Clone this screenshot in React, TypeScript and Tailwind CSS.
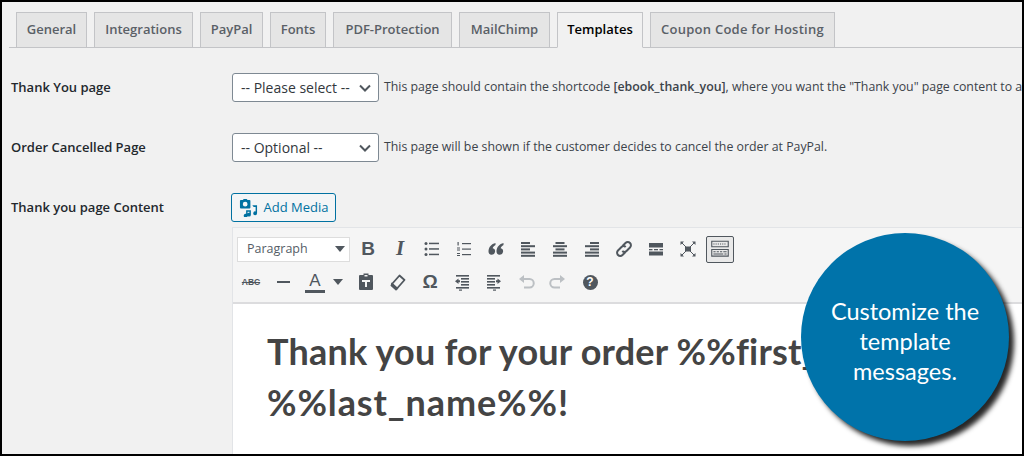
import React from 'react';

const tabs = [
  { name: 'General', w: 'w-[71px]' },
  { name: 'Integrations', w: 'w-[99px]' },
  { name: 'PayPal', w: 'w-[63px]' },
  { name: 'Fonts', w: 'w-[56px]' },
  { name: 'PDF-Protection', w: 'w-[119px]' },
  { name: 'MailChimp', w: 'w-[91px]' },
  { name: 'Templates', w: 'w-[86px]' },
  { name: 'Coupon Code for Hosting', w: 'w-[185px] tracking-[0.25px]' },
];

const ICON = '#50575e';

/** 20x20 editor icon wrapper */
function Ico({ children, size = 20 }: { children: React.ReactNode; size?: number }) {
  return (
    <svg width={size} height={size} viewBox="0 0 20 20" fill={ICON}>
      {children}
    </svg>
  );
}

function Btn({ children, className = 'w-8' }: { children: React.ReactNode; className?: string }) {
  return <div className={`h-7 flex items-center justify-center shrink-0 ${className}`}>{children}</div>;
}

function Chevron() {
  return (
    <svg width="12" height="8" viewBox="0 0 12 8" fill="none" stroke="#50575e" strokeWidth="2">
      <path d="M1 1.500l5 5 5-5" />
    </svg>
  );
}

function Caret({ color = '#50575e' }: { color?: string }) {
  return (
    <svg width="10" height="6" viewBox="0 0 10 6" fill={color}>
      <path d="M0 0h10L5 6z" />
    </svg>
  );
}

function SelectBox({ label }: { label: string }) {
  return (
    <div className="w-[147px] h-[29px] shrink-0 bg-white border border-[#7e8993] rounded-[3px] flex items-center justify-between pl-[8px] pr-[7px] text-[14px] text-[#32373c]">
      <span>{label}</span>
      <Chevron />
    </div>
  );
}

function Row({ label, children, className }: { label: string; children: React.ReactNode; className?: string }) {
  return (
    <div className={`grid grid-cols-[229px_1fr] ${className ?? ''}`}>
      <div className="pl-[9px] text-[13px] font-semibold text-[#23282d] leading-[29px]">{label}</div>
      <div className="flex items-center min-w-0">{children}</div>
    </div>
  );
}

function Lines({ rows }: { rows: [number, number][] }) {
  return (
    <Ico>
      {rows.map(([x, w], i) => (
        <rect key={i} x={x} y={3 + i * 3.2} width={w} height="2" />
      ))}
    </Ico>
  );
}

export default function App() {
  return (
    <div className="relative w-[1024px] h-[456px] overflow-hidden border-2 border-black bg-[#f1f1f1] font-['Open_Sans',sans-serif]">
      {/* Tabs */}
      <div className="mt-[10px] ml-[7px] pl-[7px] flex gap-[7px] h-[36px] border-b border-[#c3c4c7]">
        {tabs.map(t => (
          <div
            key={t.name}
            className={
              t.name === 'Templates'
                ? `${t.w} h-[36px] flex items-center justify-center border border-[#c3c4c7] border-b-[#f1f1f1] bg-[#f1f1f1] text-[13px] font-semibold text-black whitespace-nowrap`
                : `${t.w} h-[35px] flex items-center justify-center border border-b-0 border-[#c3c4c7] bg-[#e5e5e5] text-[13px] font-semibold text-[#5a6067] whitespace-nowrap`
            }
          >
            {t.name}
          </div>
        ))}
      </div>

      {/* Form rows */}
      <Row label="Thank You page" className="mt-[25px]">
        <div className="ml-[1px] flex items-center">
          <SelectBox label="-- Please select --" />
          <p className="ml-[5px] text-[12.33px] text-[#3c434a] whitespace-nowrap">
            This page should contain the shortcode <span className="font-semibold">[ebook_thank_you]</span>, where you want the "Thank you" page content to appear.
          </p>
        </div>
      </Row>
      <Row label="Order Cancelled Page" className="mt-[31px]">
        <div className="ml-[1px] flex items-center">
          <SelectBox label="-- Optional --" />
          <p className="ml-[5px] text-[12.33px] text-[#3c434a] whitespace-nowrap">
            This page will be shown if the customer decides to cancel the order at PayPal.
          </p>
        </div>
      </Row>
      <Row label="Thank you page Content" className="mt-[31px]">
        <div className="w-full">
          <div className="w-[105px] h-[29px] border border-[#0071a1] rounded-[3px] bg-[#f3f5f6] flex items-center justify-center gap-[6px] text-[13px] text-[#0071a1]">
            <svg width="19" height="19" viewBox="0 0 20 20" fill="#0071a1">
              <path d="M2 2h2l1-1h3l1 1h2a1 1 0 0 1 1 1v7a1 1 0 0 1-1 1H2a1 1 0 0 1-1-1V3a1 1 0 0 1 1-1zm4.500 2A2.500 2.500 0 1 0 6.500 9 2.500 2.500 0 0 0 6.500 4z" />
              <path d="M14 7.500h5v8.500a2 2 0 1 1-1.500-1.900V9.500H15.500zM7.500 13h5v4.500a2 2 0 1 1-1.500-1.900V14.500H9v4a2 2 0 1 1-1.500-1.900z" />
            </svg>
            <span>Add Media</span>
          </div>

          {/* Editor */}
          <div className="mt-[5px] ml-[1px] border border-[#e2e4e7] border-r-0 bg-white h-[300px]">
            <div className="h-[76px] bg-[#f5f5f5] border-b-2 border-[#dcdcde] pl-[4px] pt-[7px]">
              <div className="flex items-center h-[28px]">
                <div className="w-[113px] h-[25px] shrink-0 mr-[2px] bg-white border border-[#dddddd] flex items-center justify-between pl-[9px] pr-[4px] text-[12.5px] text-[#555d66]">
                  <span>Paragraph</span>
                  <Caret />
                </div>
                <Btn><span className="font-['Liberation_Sans',sans-serif] text-[19px] font-bold text-[#50575e]">B</span></Btn>
                <Btn><span className="font-['Liberation_Serif',serif] italic font-bold text-[21px] text-[#50575e]">I</span></Btn>
                <Btn>
                  <Ico>
                    <circle cx="4" cy="4.500" r="1.500" /><circle cx="4" cy="10" r="1.500" /><circle cx="4" cy="15.500" r="1.500" />
                    <rect x="7" y="3.700" width="10" height="1.500" /><rect x="7" y="9.200" width="10" height="1.500" /><rect x="7" y="14.700" width="10" height="1.500" />
                  </Ico>
                </Btn>
                <Btn>
                  <Ico>
                    <rect x="3.500" y="3" width="1.200" height="3.500" /><rect x="3" y="8.500" width="3" height="1" /><rect x="3" y="10.500" width="3" height="1" /><rect x="3" y="14" width="3" height="1" /><rect x="3" y="16" width="3" height="1" />
                    <rect x="8" y="4" width="9" height="1.200" /><rect x="8" y="9.500" width="9" height="1.200" /><rect x="8" y="15" width="9" height="1.200" />
                  </Ico>
                </Btn>
                <Btn>
                  <Ico>
                    <path d="M9.500 4C5.500 5 2.500 8 2.500 12.500a3.300 3.300 0 1 0 4.200-3.200C7 8 8 6.800 9.500 6zM17.500 4C13.500 5 10.500 8 10.500 12.500a3.300 3.300 0 1 0 4.200-3.200C15 8 16 6.800 17.500 6z" />
                  </Ico>
                </Btn>
                <Btn><Lines rows={[[3, 9], [3, 14], [3, 9], [3, 14], [3, 14]]} /></Btn>
                <Btn><Lines rows={[[5.500, 9], [3, 14], [5.500, 9], [3, 14], [3, 14]]} /></Btn>
                <Btn><Lines rows={[[8, 9], [3, 14], [8, 9], [3, 14], [3, 14]]} /></Btn>
                <Btn>
                  <svg width="20" height="20" viewBox="0 0 20 20" fill="none" stroke={ICON} strokeWidth="2">
                    <path d="M8.500 7l3-3a3 3 0 0 1 4.500 4.500l-3.500 3.500a3 3 0 0 1-4.200 0" />
                    <path d="M11.500 13l-3 3a3 3 0 0 1-4.500-4.500l3.500-3.500a3 3 0 0 1 4.200 0" />
                  </svg>
                </Btn>
                <Btn>
                  <Ico>
                    <rect x="3" y="4" width="14" height="4.500" /><rect x="3" y="10" width="3.500" height="1.300" /><rect x="8" y="10" width="4" height="1.300" /><rect x="13.500" y="10" width="3.500" height="1.300" /><rect x="3" y="12.500" width="14" height="4" />
                  </Ico>
                </Btn>
                <Btn>
                  <Ico>
                    <rect x="7" y="7.500" width="6" height="5" />
                    <path d="M3 3l14 14M17 3L3 17" stroke={ICON} strokeWidth="1" />
                    <path d="M2.500 2.500h3.500L2.500 6zM17.500 2.500V6L14 2.500zM2.500 17.500V14L6 17.500zM17.500 17.500H14L17.500 14z" />
                  </Ico>
                </Btn>
                <div className="w-[28px] h-[27px] ml-[2px] shrink-0 border border-[#50575e] rounded-[2px] bg-[#e9e9e9] flex items-center justify-center">
                  <Ico size={22}>
                    <path d="M2 2.500h16v6H2zm1 1v4h14v-4zM4 5h1v1H4zm2 0h1v1H6zm2 0h1v1H8zm2 0h1v1h-1zm2 0h1v1h-1zm2 0h1v1h-1zM2 10h16v7H2zm1 1v5h14v-5zM4 12h2v1H4zm3 0h2v1H7zm3 0h2v1h-2zm3 0h3v1h-3zM4 14h9v1H4zm10 0h2v1h-2z" fillRule="evenodd" />
                  </Ico>
                </div>
              </div>
              <div className="flex items-center h-[28px] mt-[5px] -ml-[2px]">
                <Btn>
                  <span className="relative font-['Liberation_Sans',sans-serif] text-[8.500px] font-bold text-[#50575e] line-through">ABC</span>
                </Btn>
                <Btn><div className="w-[13px] h-[2px] bg-[#50575e]" /></Btn>
                <div className="w-[51px] h-7 shrink-0 flex items-center pl-[8px]">
                  <div className="flex flex-col items-center w-[16px] leading-none">
                    <span className="text-[17px] leading-[17px] text-[#50575e] font-['Liberation_Sans',sans-serif]">A</span>
                    <div className="w-[20px] h-[3px] bg-[#50575e] mt-[1px]" />
                  </div>
                  <div className="ml-[10px]"><Caret /></div>
                </div>
                <Btn>
                  <Ico>
                    <path d="M7.500 1.500h5V3H16a1 1 0 0 1 1 1v13a1 1 0 0 1-1 1H4a1 1 0 0 1-1-1V4a1 1 0 0 1 1-1h3.500zM8.500 3v1.500h3V3zM6 8v2h3v5h2v-5h3V8z" fillRule="evenodd" />
                  </Ico>
                </Btn>
                <Btn>
                  <svg width="20" height="20" viewBox="0 0 20 20" fill="none" stroke={ICON} strokeWidth="1.800">
                    <path d="M11.500 3.500l5 4.500-7.500 8.500-5-4.500z" strokeLinejoin="round" />
                    <path d="M4 12l5 4.500-1 1-4.500-4z" fill={ICON} />
                  </svg>
                </Btn>
                <Btn><span className="font-['Liberation_Sans',sans-serif] text-[19px] font-bold text-[#50575e]">Ω</span></Btn>
                <Btn>
                  <Ico>
                    <rect x="4" y="3" width="13" height="1.600" /><rect x="9" y="6" width="8" height="1.600" /><rect x="9" y="9" width="8" height="1.600" /><rect x="9" y="12" width="8" height="1.600" /><rect x="4" y="15" width="13" height="1.600" /><rect x="7" y="17.500" width="3" height="1.200" />
                    <path d="M3 9.300L6.500 6.500v1.800H8v2H6.500V12z" />
                  </Ico>
                </Btn>
                <Btn>
                  <Ico>
                    <rect x="3" y="3" width="13" height="1.600" /><rect x="3" y="6" width="8" height="1.600" /><rect x="3" y="9" width="8" height="1.600" /><rect x="3" y="12" width="8" height="1.600" /><rect x="3" y="15" width="13" height="1.600" /><rect x="9" y="17.500" width="3" height="1.200" />
                    <path d="M17 9.300L13.500 6.500v1.800H12v2h1.500V12z" />
                  </Ico>
                </Btn>
                <Btn>
                  <svg width="20" height="20" viewBox="0 0 20 20" fill="none" stroke="#bcc0c4" strokeWidth="2">
                    <path d="M8 7h5.500a3.800 3.800 0 0 1 0 8.500H8" />
                    <path d="M8 3v8L3 7z" fill="#bcc0c4" stroke="none" />
                  </svg>
                </Btn>
                <Btn>
                  <svg width="20" height="20" viewBox="0 0 20 20" fill="none" stroke="#bcc0c4" strokeWidth="2">
                    <path d="M12 7H6.500a3.800 3.800 0 0 0 0 8.500H12" />
                    <path d="M12 3v8l5-4z" fill="#bcc0c4" stroke="none" />
                  </svg>
                </Btn>
                <Btn>
                  <div className="w-[15px] h-[15px] rounded-full bg-[#50575e] flex items-center justify-center text-white text-[12px] font-bold leading-none font-['Liberation_Sans',sans-serif]">?</div>
                </Btn>
              </div>
            </div>
            <div className="pl-[34px] pt-[22px] text-[36px] leading-[51px] tracking-[0.2px] font-bold text-[#444444] whitespace-nowrap font-['Lato',sans-serif]">
              Thank you for your order %%first_name%%
              <br />
              <span className="tracking-[0.9px]">%%last_name%%!</span>
            </div>
          </div>
        </div>
      </Row>

      {/* Callout */}
      <div className="absolute left-[799px] top-[231px] w-[208px] h-[208px] rounded-full bg-[#0073aa] shadow-[5px_5px_5px_rgba(0,0,0,0.85)] flex items-center justify-center text-center text-white text-[23.500px] leading-[30px] font-['Lato',sans-serif]">
        <div className="mt-[7px]">
          Customize the
          <br />
          template
          <br />
          messages.
        </div>
      </div>
    </div>
  );
}
